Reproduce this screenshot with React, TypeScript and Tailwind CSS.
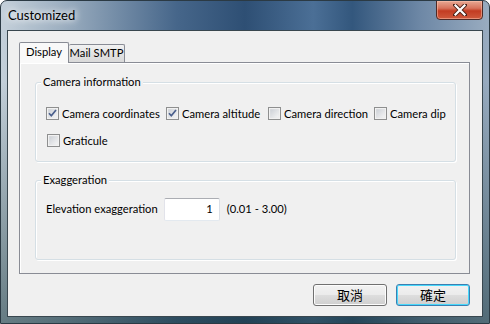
import React from "react";

const font = { fontFamily: '"Lato", "Liberation Sans", sans-serif' };

function CheckBox({ checked }: { checked: boolean }) {
  return (
    <svg width="13" height="13" viewBox="0 0 13 13" className="shrink-0">
      <defs>
        <linearGradient id="cbg" x1="0" y1="0" x2="1" y2="1">
          <stop offset="0" stopColor="#cbcfd5" />
          <stop offset="1" stopColor="#f6f6f6" />
        </linearGradient>
      </defs>
      <rect x="0.5" y="0.5" width="12" height="12" fill="#f4f4f4" stroke="#8e8f8f" />
      <rect x="2" y="2" width="9" height="9" fill="url(#cbg)" stroke="#e6e6e6" strokeWidth="0.5" />
      {checked && (
        <path d="M3 6.2 L5.3 8.8 L10 3" fill="none" stroke="#4a5f8c" strokeWidth="1.7" strokeLinejoin="round" />
      )}
    </svg>
  );
}

function Check({ label, checked, w }: { label: string; checked: boolean; w?: string }) {
  return (
    <div className={`flex items-center gap-[3px] ${w ?? ""}`}>
      <CheckBox checked={checked} />
      <span className="text-[11.2px] leading-[15px] text-black whitespace-nowrap">{label}</span>
    </div>
  );
}

function Group({ title, children, className }: { title: string; children: React.ReactNode; className?: string }) {
  return (
    <div className={`relative rounded-[3px] border border-[#d5dfe5] shadow-[inset_1px_1px_0_#ffffff,1px_1px_0_#ffffff] ${className ?? ""}`}>
      <span className="absolute left-[5px] top-[-9px] bg-[#f0f0f0] px-[2px] text-[11.2px] leading-[15px] text-black whitespace-nowrap">
        {title}
      </span>
      {children}
    </div>
  );
}

function Button({ label, def }: { label: string; def?: boolean }) {
  return (
    <div
      className={`flex h-[22px] w-[74px] items-center justify-center rounded-[3px] border text-[13px] text-black ${
        def
          ? "border-[#3c7fb1] shadow-[inset_0_0_0_1px_#48d8fb]"
          : "border-[#707070] shadow-[inset_0_0_0_1px_#fcfcfc]"
      } bg-[linear-gradient(180deg,#f2f2f2_0%,#ebebeb_48%,#dddddd_52%,#cfcfcf_100%)]`}
      style={{ fontFamily: '"Noto Sans CJK TC", "Noto Sans CJK SC", sans-serif' }}
    >
      {label}
    </div>
  );
}

export default function App() {
  return (
    <div className="bg-white" style={font}>
      <div className="relative flex h-[324px] w-[490px] flex-col overflow-hidden rounded-t-[7px] border border-[#2b3a44] bg-[linear-gradient(180deg,rgba(0,0,0,0)_0%,rgba(0,0,0,0)_25%,rgba(25,55,60,0.55)_100%),linear-gradient(90deg,#c4d0da_0%,#9fb1c2_12%,#46668a_36%,#2e4f74_50%,#4b6f96_64%,#33577d_72%,#6e88a6_86%,#99acc0_100%)]">
        {/* title bar */}
        <div className="flex h-[29px] shrink-0 items-center pl-[7px] pt-[1px]">
          <span className="text-[13px] text-black whitespace-nowrap [text-shadow:0_0_6px_#ffffff,0_0_10px_#ffffff]">Customized</span>
        </div>
        {/* close button */}
        <div className="absolute right-[6px] top-[-1px] flex h-[20px] w-[47px] items-center justify-center rounded-b-[4px] border border-[#4e2a26] bg-[linear-gradient(180deg,#e8a893_0%,#d7735c_40%,#c33c22_55%,#cf5a3d_100%)] shadow-[inset_0_0_0_1px_rgba(255,200,180,0.5)]">
          <svg width="14" height="12" viewBox="0 0 14 12">
            <path d="M2 1 L12 11 M12 1 L2 11" stroke="#4a2218" strokeWidth="4" strokeLinecap="square" />
            <path d="M2.5 1.5 L11.5 10.5 M11.5 1.5 L2.5 10.5" stroke="#ffffff" strokeWidth="2.2" strokeLinecap="square" />
          </svg>
        </div>

        {/* client area */}
        <div className="mx-[6px] mb-[6px] flex flex-1 flex-col border border-[#39474f] bg-[#f0f0f0] px-[11px] pt-[11px] pr-[12px]">
          {/* tabs */}
          <div className="relative z-10 flex h-[20px] items-end">
            <div className="flex h-[21px] w-[50px] items-center justify-center rounded-t-[2px] border border-b-0 border-[#898c95] bg-[#f9f9f9] mb-[-1px] pb-[1px] text-[11.2px] text-black whitespace-nowrap">
              Display
            </div>
            <div className="flex h-[18px] w-[56px] items-center justify-center rounded-t-[2px] border border-l-0 border-b-0 border-[#898c95] bg-[linear-gradient(180deg,#f2f2f2_0%,#e3e3e3_50%,#d9d9d9_100%)] text-[11.2px] text-black whitespace-nowrap">
              Mail SMTP
            </div>
          </div>
          {/* panel */}
          <div className="flex h-[212px] flex-col border border-[#898c95] bg-[#f0f0f0] px-[15px] pt-[19px] pr-[13px] shadow-[inset_1px_1px_0_#ffffff]">
            <Group title="Camera information" className="h-[80px]">
              <div className="flex flex-col pl-[10px] pt-[23px]">
                <div className="flex items-center">
                  <Check label="Camera coordinates" checked w="w-[120px]" />
                  <Check label="Camera altitude" checked w="w-[102px]" />
                  <Check label="Camera direction" checked={false} w="w-[106px]" />
                  <Check label="Camera dip" checked={false} />
                </div>
                <div className="mt-[12px] flex items-center pl-[1px]">
                  <Check label="Graticule" checked={false} />
                </div>
              </div>
            </Group>
            <Group title="Exaggeration" className="mt-[18px] h-[80px]">
              <div className="flex items-center pl-[10px] pt-[17px]">
                <span className="text-[11.2px] text-black whitespace-nowrap">Elevation exaggeration</span>
                <div className="ml-[6px] flex h-[23px] w-[56px] items-center justify-end rounded-[2px] border border-t-[#abadb3] border-l-[#e2e3ea] border-r-[#dbdfe6] border-b-[#e3e9ef] bg-white pr-[6px] text-[11.2px] text-black">
                  1
                </div>
                <span className="ml-[7px] text-[11.2px] text-black whitespace-nowrap">(0.01 - 3.00)</span>
              </div>
            </Group>
          </div>
          {/* buttons */}
          <div className="mt-[10px] flex justify-end gap-[9px]">
            <Button label="取消" />
            <Button label="確定" def />
          </div>
        </div>
      </div>
    </div>
  );
}
